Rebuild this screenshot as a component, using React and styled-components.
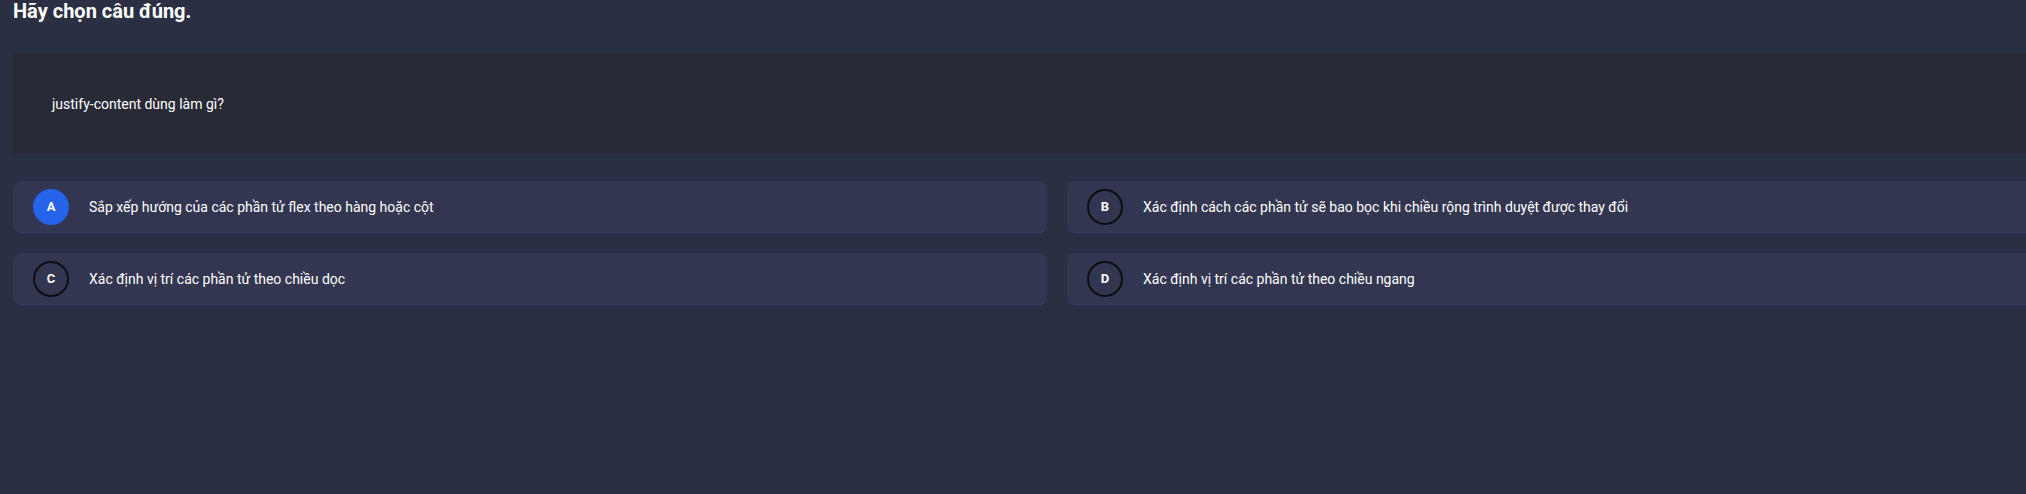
import React from "react";
import styled, { createGlobalStyle } from "styled-components";

const GlobalStyle = createGlobalStyle`
  html, body {
    margin: 0;
    padding: 0;
    background: #2a2f44;
    overflow: hidden;
  }
  body {
    font-family: Roboto, "Noto Sans", sans-serif;
    color: #ffffff;
  }
`;

const Page = styled.div`
  width: 2088px;
  min-height: 494px;
  padding: 0 13px;
`;

const Title = styled.h2`
  margin: 0;
  font-size: 20px;
  font-weight: 700;
  line-height: 23px;
  color: #ffffff;
`;

const QuestionBox = styled.div`
  margin-top: 30px;
  height: 101px;
  display: flex;
  align-items: center;
  padding: 0 39px;
  background: #282a36;
  border-radius: 4px;
  font-size: 14px;
  color: #ffffff;
`;

const Options = styled.div`
  margin-top: 27px;
  display: grid;
  grid-template-columns: 1fr 1fr;
  column-gap: 20px;
  row-gap: 20px;
`;

const Option = styled.div`
  height: 52px;
  box-sizing: border-box;
  display: flex;
  align-items: center;
  gap: 20px;
  padding: 0 20px;
  background: #333650;
  border-bottom: 1px solid #3a3e6c;
  border-radius: 8px;
  font-size: 14px;
  color: #ffffff;
  cursor: pointer;
`;

const Letter = styled.span`
  width: 36px;
  height: 36px;
  box-sizing: border-box;
  flex: none;
  display: flex;
  align-items: center;
  justify-content: center;
  border-radius: 50%;
  border: 2px solid ${(p) => (p.$active ? "#2563eb" : "#0d0e14")};
  background: ${(p) => (p.$active ? "#2563eb" : "transparent")};
  font-size: 13px;
  font-weight: 700;
  color: #ffffff;
`;

const answers = [
  { key: "A", text: "Sắp xếp hướng của các phần tử flex theo hàng hoặc cột", active: true },
  { key: "B", text: "Xác định cách các phần tử sẽ bao bọc khi chiều rộng trình duyệt được thay đổi" },
  { key: "C", text: "Xác định vị trí các phần tử theo chiều dọc" },
  { key: "D", text: "Xác định vị trí các phần tử theo chiều ngang" },
];

export default function App() {
  return (
    <Page>
      <GlobalStyle />
      <Title>Hãy chọn câu đúng.</Title>
      <QuestionBox>justify-content dùng làm gì?</QuestionBox>
      <Options>
        {answers.map((a) => (
          <Option key={a.key}>
            <Letter $active={a.active}>{a.key}</Letter>
            {a.text}
          </Option>
        ))}
      </Options>
    </Page>
  );
}
